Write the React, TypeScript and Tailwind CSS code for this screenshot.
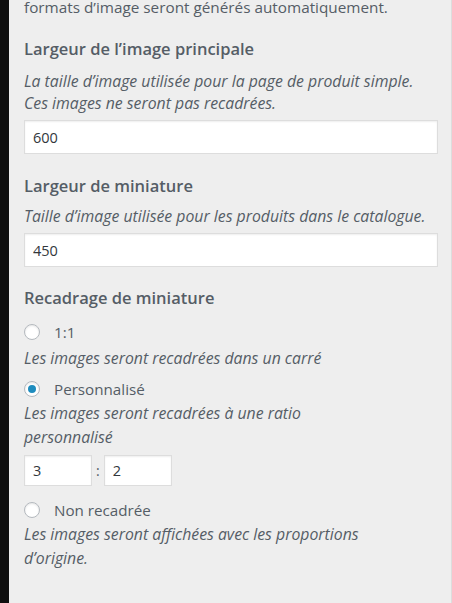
import { useState } from "react";

const font = { fontFamily: '"Segoe UI", "Open Sans", "Liberation Sans", sans-serif' };

function Radio({ checked, label, onClick }: { checked: boolean; label: string; onClick: () => void }) {
  return (
    <label className="flex h-6 cursor-pointer items-center gap-[14px]" onClick={onClick}>
      <span className="flex h-4 w-4 items-center justify-center rounded-full border border-[#b4b9be] bg-white shadow-[inset_0_1px_2px_rgba(0,0,0,0.1)]">
        {checked && <span className="h-2 w-2 rounded-full bg-[#1e8cbe]" />}
      </span>
      <span className="text-[15.2px] text-[#555d66]">{label}</span>
    </label>
  );
}

export default function App() {
  const [crop, setCrop] = useState("custom");

  return (
    <div className="flex h-[603px] w-[452px] overflow-hidden bg-[#eee]" style={font}>
      <div className="w-[9px] shrink-0 bg-[#0f0f0f]" />
      <div className="flex-1 border-r border-[#ddd] pl-[15px] pr-[13px]">
        <p className="-mt-[4px] text-[15.3px] leading-[22px] text-[#555d66]">
          formats d’image seront générés automatiquement.
        </p>

        <h3 className="mt-[19px] text-[16.5px] font-semibold leading-6 text-[#555d66]">
          Largeur de l’image principale
        </h3>
        <p className="mt-[9px] text-[15.8px] italic leading-[22px] text-[#555d66]">
          La taille d’image utilisée pour la page de produit simple.
          <br />
          Ces images ne seront pas recadrées.
        </p>
        <input
          defaultValue="600"
          className="mt-[6px] block h-[34px] w-full border border-[#ddd] bg-white px-2 text-[14.5px] text-[#32373c] shadow-[inset_0_1px_2px_rgba(0,0,0,0.07)] outline-none"
        />

        <h3 className="mt-[20px] text-[16.5px] font-semibold leading-6 text-[#555d66]">
          Largeur de miniature
        </h3>
        <p className="mt-[7px] text-[15.8px] italic leading-[22px] text-[#555d66]">
          Taille d’image utilisée pour les produits dans le catalogue.
        </p>
        <input
          defaultValue="450"
          className="mt-[6px] block h-[34px] w-full border border-[#ddd] bg-white px-2 text-[14.5px] text-[#32373c] shadow-[inset_0_1px_2px_rgba(0,0,0,0.07)] outline-none"
        />

        <h3 className="mt-[19px] text-[16.5px] font-semibold leading-6 text-[#555d66]">
          Recadrage de miniature
        </h3>

        <div className="mt-[10px]">
          <Radio checked={crop === "1:1"} label="1:1" onClick={() => setCrop("1:1")} />
          <p className="mt-[3px] text-[15.8px] italic leading-[22px] text-[#555d66]">
            Les images seront recadrées dans un carré
          </p>
        </div>

        <div className="mt-[8px]">
          <Radio checked={crop === "custom"} label="Personnalisé" onClick={() => setCrop("custom")} />
          <p className="text-[15.8px] italic leading-6 text-[#555d66]">
            Les images seront recadrées à une ratio
            <br />
            personnalisé
          </p>
          <div className="mt-[6px] flex items-center gap-[4px]">
            <input
              defaultValue="3"
              className="block h-[31px] w-[68px] border border-[#ddd] bg-white px-2 text-[14.5px] text-[#32373c] shadow-[inset_0_1px_2px_rgba(0,0,0,0.07)] outline-none"
            />
            <span className="text-[14px] text-[#555d66]">:</span>
            <input
              defaultValue="2"
              className="block h-[31px] w-[68px] border border-[#ddd] bg-white px-2 text-[14.5px] text-[#32373c] shadow-[inset_0_1px_2px_rgba(0,0,0,0.07)] outline-none"
            />
          </div>
        </div>

        <div className="mt-[12px]">
          <Radio checked={crop === "none"} label="Non recadrée" onClick={() => setCrop("none")} />
          <p className="text-[15.8px] italic leading-6 text-[#555d66]">
            Les images seront affichées avec les proportions
            <br />
            d’origine.
          </p>
        </div>
      </div>
    </div>
  );
}
